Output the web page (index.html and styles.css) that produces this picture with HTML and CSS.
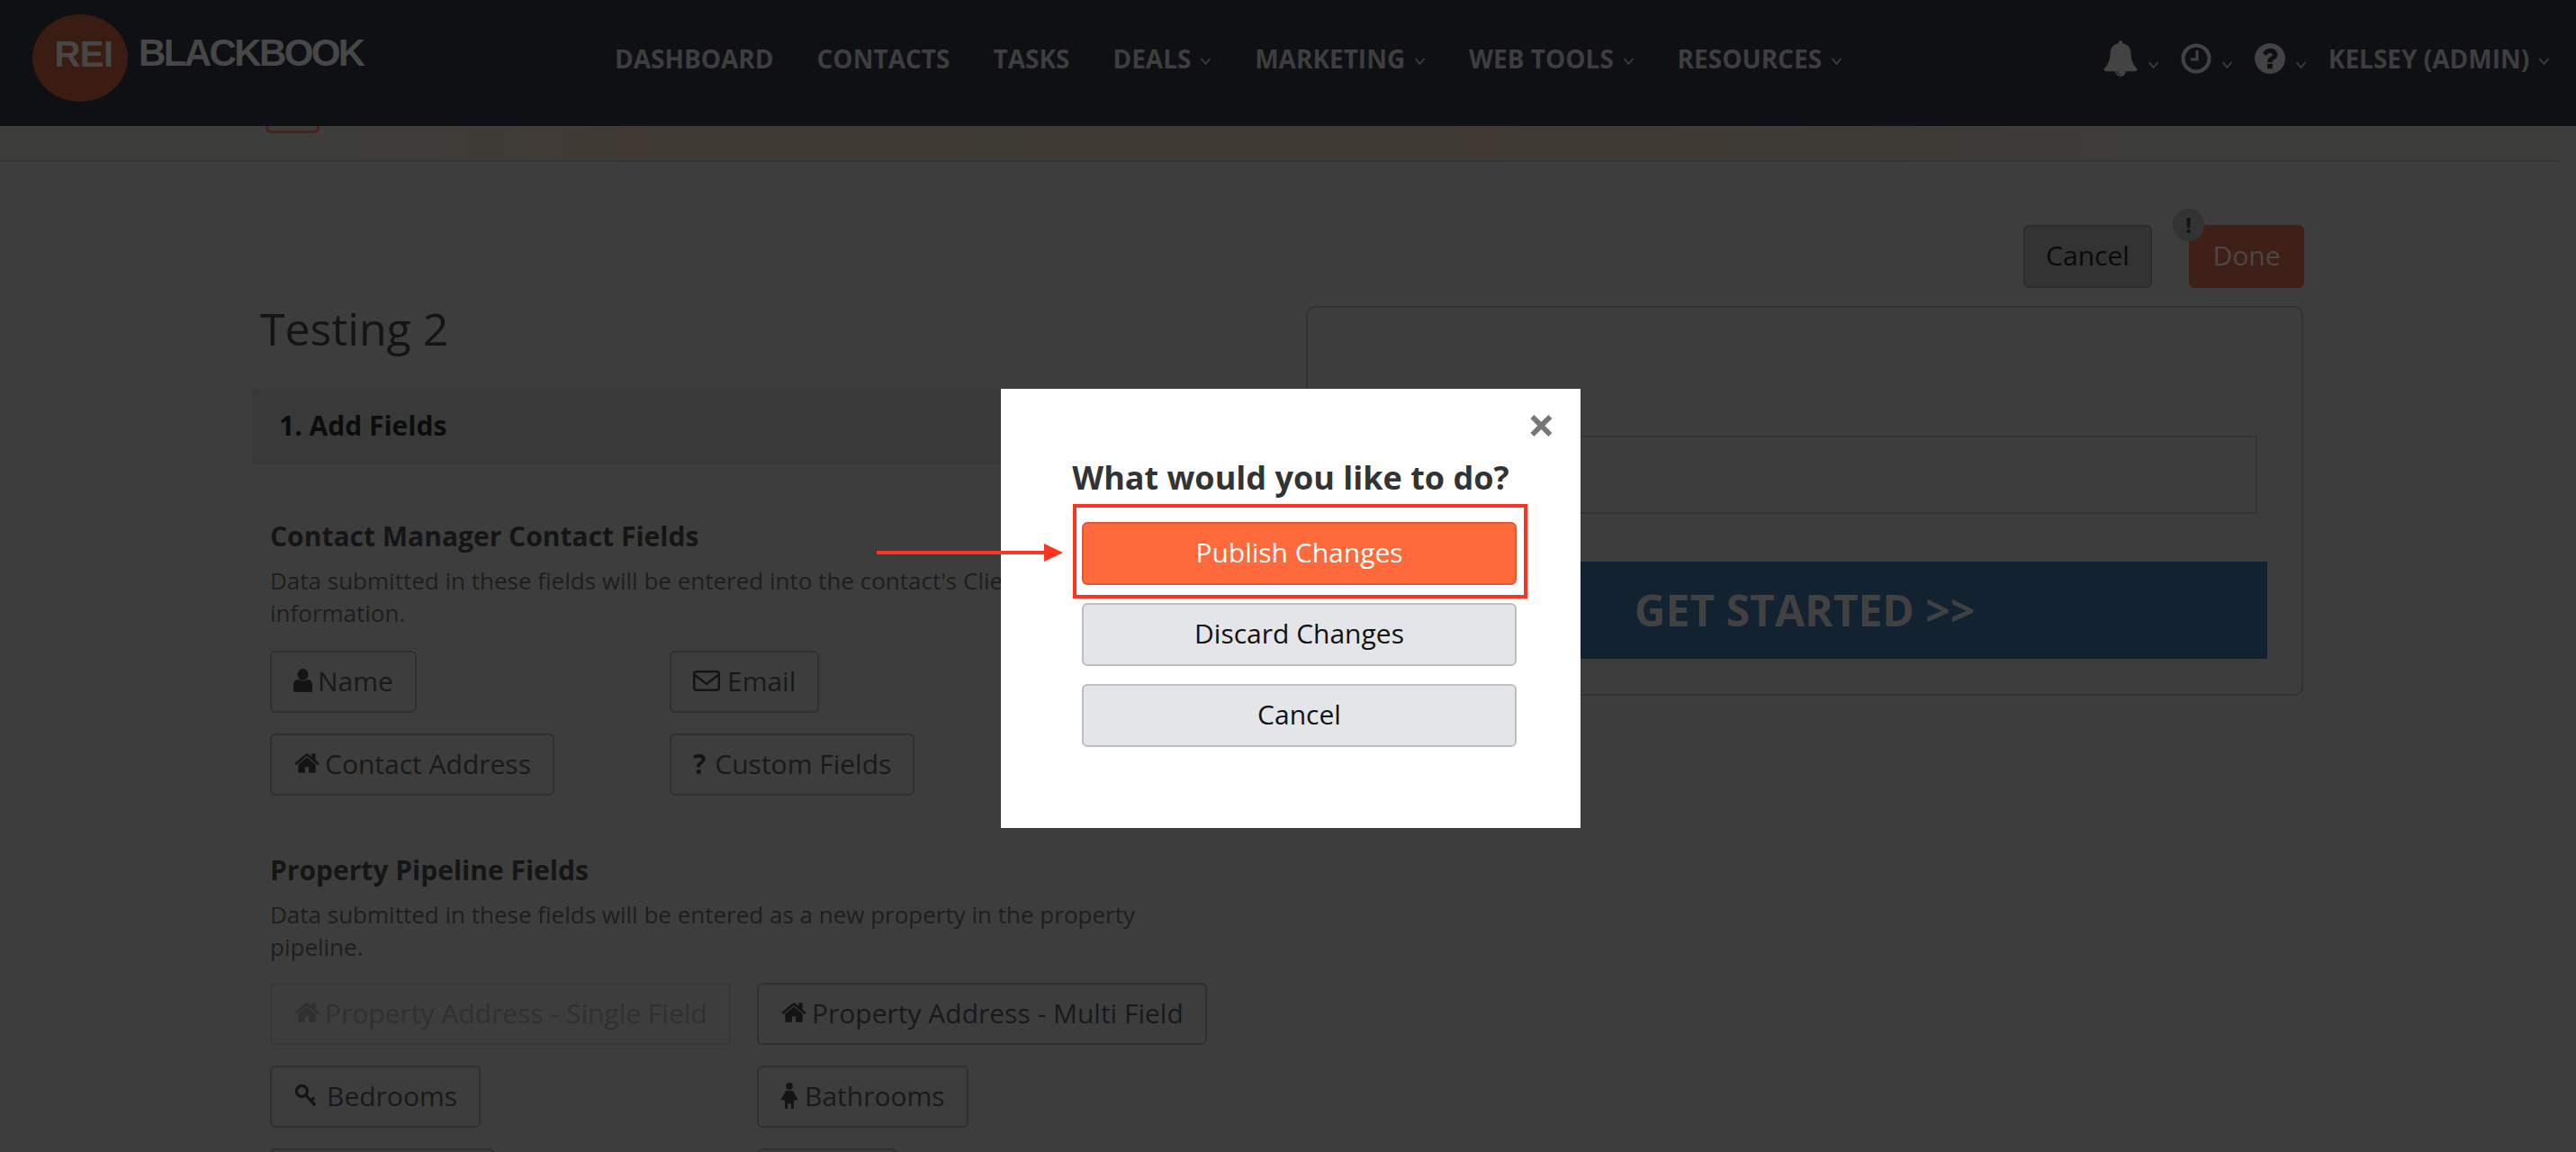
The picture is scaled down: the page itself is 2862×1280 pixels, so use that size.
FILE: index.html
```html
<!DOCTYPE html>
<html lang="en">
<head>
    <meta charset="UTF-8">
    <title>REI BlackBook - Form Builder</title>
    <link rel="stylesheet" href="styles.css">
</head>
<body>
    <svg class="sprites" width="0" height="0">
        <symbol id="i-home" viewBox="0 0 1792 1792"><path d="M1472 992v480q0 26-19 45t-45 19h-384v-384h-256v384h-384q-26 0-45-19t-19-45v-480q0-1 .5-3t.5-3l575-474 575 474q1 2 1 6zm223-69l-62 74q-8 9-21 11h-3q-13 0-21-7l-692-577-692 577q-12 8-24 7-13-2-21-11l-62-74q-8-10-7-23.5t11-21.5l719-599q32-26 76-26t76 26l244 204v-195q0-14 9-23t23-9h192q14 0 23 9t9 23v408l219 182q10 8 11 21.5t-7 23.5z"/></symbol>
        <symbol id="i-chev" viewBox="0 0 12 8"><path d="M1 1l5 6 5-6" fill="none" stroke="currentColor" stroke-width="1.8"/></symbol>
    </svg>

    <header class="topbar">
        <a class="logo">
            <span class="logo-rei">REI</span>
            <span class="logo-name">BLACKBOOK</span>
        </a>
        <nav class="mainnav">
            <a>Dashboard</a>
            <a>Contacts</a>
            <a>Tasks</a>
            <a>Deals <svg class="chev"><use href="#i-chev"/></svg></a>
            <a>Marketing <svg class="chev"><use href="#i-chev"/></svg></a>
            <a>Web Tools <svg class="chev"><use href="#i-chev"/></svg></a>
            <a>Resources <svg class="chev"><use href="#i-chev"/></svg></a>
        </nav>
        <div class="usernav">
            <a class="tool">
                <svg class="tool-bell" viewBox="0 0 1792 1792"><path d="M912 1696q0-16-16-16-59 0-101.5-42.5t-42.5-101.5q0-16-16-16t-16 16q0 73 51.5 124.5t124.5 51.5q16 0 16-16zm816-288q0 52-38 90t-90 38h-448q0 106-75 181t-181 75-181-75-75-181h-448q-52 0-90-38t-38-90q50-42 91-88t85-119.5 74.5-158.5 50-206 19.5-260q0-152 117-282.5t307-158.5q-8-19-8-39 0-40 28-68t68-28 68 28 28 68q0 20-8 39 190 28 307 158.5t117 282.5q0 139 19.5 260t50 206 74.5 158.5 85 119.5 91 88z"/></svg>
                <svg class="chev chev-low"><use href="#i-chev"/></svg>
            </a>
            <a class="tool">
                <svg class="tool-round" viewBox="0 0 34 34"><circle cx="17" cy="17" r="14.5" fill="none" stroke="currentColor" stroke-width="4"/><path d="M18 8v10h-7" fill="none" stroke="currentColor" stroke-width="3"/></svg>
                <svg class="chev chev-low"><use href="#i-chev"/></svg>
            </a>
            <a class="tool">
                <svg class="tool-round" viewBox="128 128 1536 1536"><path d="M1024 1376v-192q0-14-9-23t-23-9h-192q-14 0-23 9t-9 23v192q0 14 9 23t23 9h192q14 0 23-9t9-23zm256-672q0-88-55.5-163t-138.5-116-170-41q-243 0-371 213-15 24 8 42l132 100q7 6 19 6 16 0 25-12 53-68 86-92 34-24 86-24 48 0 85.5 26t37.5 59q0 38-20 61t-68 45q-63 28-115.5 86.5t-52.5 125.5v36q0 14 9 23t23 9h192q14 0 23-9t9-23q0-19 21.5-49.5t54.5-49.5q32-18 49-28.5t46-35 44.5-48 28-60.5 12.5-81zm384 192q0 209-103 385.5t-279.5 279.5-385.5 103-385.5-103-279.5-279.5-103-385.5 103-385.5 279.5-279.5 385.5-103 385.5 103 279.5 279.5 103 385.5z"/></svg>
                <svg class="chev chev-low"><use href="#i-chev"/></svg>
            </a>
            <a class="user">Kelsey (Admin) <svg class="chev"><use href="#i-chev"/></svg></a>
        </div>
    </header>

    <div class="strip"><span class="strip-btn"></span></div>

    <main class="builder">
        <div class="page-actions">
            <button class="btn-cancel">Cancel</button>
            <button class="btn-done">Done<span class="badge">!</span></button>
        </div>

        <div class="columns">
            <section class="col-left">
                <h1>Testing 2</h1>
                <div class="step-head">1. Add Fields</div>

                <h3>Contact Manager Contact Fields</h3>
                <p>Data submitted in these fields will be entered into the contact's Client Manager<br>information.</p>
                <div class="fields fields-contact">
                    <a class="field">
                        <svg class="ico ico-user" viewBox="0 0 21 26"><ellipse cx="10.5" cy="6.5" rx="6" ry="6.5"/><path d="M0 24v-6q0-5 5-6 5 3 11 0 5 1 5 6v6q0 2-2 2H2q-2 0-2-2z"/></svg>
                        Name
                    </a>
                    <a class="field">
                        <svg class="ico ico-mail" viewBox="0 0 30 23"><rect x="1.2" y="1.2" width="27.6" height="20.6" rx="2.5" fill="none" stroke="currentColor" stroke-width="2.4"/><path d="M2 5l13 10L28 5" fill="none" stroke="currentColor" stroke-width="2.4"/></svg>
                        Email
                    </a>
                    <a class="field"><svg class="ico ico-home"><use href="#i-home"/></svg> Contact Address</a>
                    <a class="field"><b class="ico-q">?</b> Custom Fields</a>
                </div>

                <h3 class="second">Property Pipeline Fields</h3>
                <p>Data submitted in these fields will be entered as a new property in the property<br>pipeline.</p>
                <div class="fields fields-property">
                    <a class="field field-off"><svg class="ico ico-home"><use href="#i-home"/></svg> Property Address - Single Field</a>
                    <a class="field"><svg class="ico ico-home"><use href="#i-home"/></svg> Property Address - Multi Field</a>
                    <a class="field">
                        <svg class="ico ico-key" viewBox="0 0 28 28"><circle cx="9" cy="9" r="6.5" fill="none" stroke="currentColor" stroke-width="3.4"/><path d="M13 13l12 13M20 20l4-3" fill="none" stroke="currentColor" stroke-width="3.4"/></svg>
                        Bedrooms
                    </a>
                    <a class="field">
                        <svg class="ico ico-female" viewBox="0 0 20 30"><circle cx="10" cy="4" r="4"/><path d="M6 9h8l6 11h-4l-1 3v7h-3v-6H8v6H5v-7l-1-3H0z"/></svg>
                        Bathrooms
                    </a>
                    <a class="field field-w1"></a>
                    <a class="field field-w2"></a>
                </div>
            </section>

            <aside class="preview">
                <div class="preview-input"></div>
                <div class="preview-cta">GET STARTED &gt;&gt;</div>
            </aside>
        </div>
    </main>

    <div class="modal">
        <span class="modal-close">&times;</span>
        <h2>What would you like to do?</h2>
        <div class="modal-actions">
            <button class="mbtn mbtn-primary">Publish Changes</button>
            <button class="mbtn">Discard Changes</button>
            <button class="mbtn">Cancel</button>
        </div>
    </div>

    <!-- red callout from the screenshot -->
    <div class="callout-box"></div>
    <div class="callout-arrow"></div>
</body>
</html>
```

FILE: styles.css
```css
* {
    box-sizing: border-box;
}
html, body {
    height: 1280px;
    overflow: hidden;
}
body {
    margin: 0;
    position: relative;
    background-color: #3d3d3d;
    color: #191919;
    font-family: "Open Sans", Arial, sans-serif;
}
.sprites {
    position: absolute;
}
svg {
    fill: currentColor;
}

/* top bar */
.topbar {
    position: relative;
    z-index: 1;
    display: flex;
    align-items: center;
    height: 140px;
    background-color: #0e1013;
    color: #3e3e3e;
    font-size: 28px;
    font-weight: 700;
    text-transform: uppercase;
    white-space: nowrap;
}
.logo {
    display: flex;
    width: 683px;
    flex: none;
    height: 140px;
    font-family: "Liberation Sans", Arial, sans-serif;
    color: #474747;
}
.logo-rei {
    display: flex;
    align-items: flex-start;
    justify-content: center;
    width: 106px;
    height: 97px;
    margin: 16px 0 0 36px;
    padding-top: 20px;
    padding-left: 8px;
    border-radius: 50%;
    background-color: #3a1c13;
    font-size: 40px;
    line-height: 48px;
    letter-spacing: -0.5px;
}
.logo-name {
    margin: 34px 0 0 12px;
    font-size: 42px;
    line-height: 50px;
    letter-spacing: -2.6px;
}
.mainnav {
    display: flex;
    gap: 48px;
    margin-bottom: 11px;
}
.chev {
    width: 13px;
    height: 8px;
    margin-left: 2.5px;
    vertical-align: 4px;
}
.chev-low {
    align-self: center;
    margin: 14px 0 0 11px;
}
.usernav {
    display: flex;
    align-items: center;
    margin-left: 289px;
    margin-bottom: 11px;
}
.tool {
    display: flex;
    color: #434343;
    margin-right: 24px;
}
.tool .chev {
    color: #3e3e3e;
}
.tool-bell {
    width: 40px;
    height: 40px;
    margin-right: -1px;
}
.tool-round {
    width: 34px;
    height: 34px;
}
.user {
    margin-left: 0;
}

/* strip under the top bar */
.strip {
    position: relative;
    width: 2844px;
    height: 40px;
    border-bottom: 2px solid #353535;
    background: linear-gradient(90deg, #3d3d3c 0, #3d3d3b 380px, #403a33 700px, #3e3a34 1100px, #403a33 1650px, #3e3b36 2100px, #3c3c3a 2400px, #3c3c3b 100%);
}
.strip-btn {
    position: absolute;
    left: 295px;
    top: -20px;
    width: 60px;
    height: 28px;
    border: 3px solid #4f2015;
    border-radius: 6px;
}

/* builder page */
.builder {
    height: 1100px;
    overflow: hidden;
    padding: 70px 302px 0 280px;
}
.page-actions {
    display: flex;
    justify-content: flex-end;
    gap: 41px;
}
.page-actions button {
    position: relative;
    height: 70px;
    padding: 0 0 3px;
    border-radius: 6px;
    font-family: inherit;
    font-size: 30px;
}
.btn-cancel {
    width: 143px;
    border: 2px solid #2c2c2c;
    background-color: #333;
    color: #0a0a0a;
}
.btn-done {
    width: 128px;
    border: 0;
    background-color: #3f2018;
    color: #4b4746;
}
.badge {
    position: absolute;
    left: -18px;
    top: -18px;
    width: 35px;
    height: 36px;
    border-radius: 50%;
    background-color: #333;
    color: #111;
    font-size: 24px;
    font-weight: 700;
    line-height: 36px;
    text-align: center;
}
.columns {
    display: flex;
}
.col-left {
    width: 1171px;
    flex: none;
}
h1 {
    margin: 12px 0 0 9px;
    font-size: 50px;
    font-weight: 400;
    line-height: 66px;
    color: #141414;
}
.step-head {
    width: 1100px;
    height: 84px;
    margin-top: 34px;
    padding-left: 28px;
    border: 2px solid #383838;
    background-color: #393939;
    color: #0c0c0c;
    font-size: 30px;
    font-weight: 700;
    line-height: 78px;
}
h3 {
    margin: 60px 0 0 20px;
    font-size: 30px;
    font-weight: 700;
    line-height: 40px;
    color: #151515;
}
h3.second {
    margin-top: 63px;
}
p {
    margin: 11px 0 0 20px;
    font-size: 26px;
    line-height: 36.4px;
    color: #1e1e1e;
}
.fields {
    display: grid;
    grid-auto-rows: 69px;
    row-gap: 23px;
    justify-items: start;
    margin: 23px 0 0 20px;
}
.fields-contact {
    grid-template-columns: 444px 1fr;
}
.fields-property {
    grid-template-columns: 541px 1fr;
    margin-top: 21px;
}
.field {
    display: flex;
    align-items: center;
    gap: 6px;
    height: 69px;
    padding: 0 24px 2px;
    border: 2px solid #303030;
    border-radius: 6px;
    font-size: 30px;
    color: #191919;
    white-space: nowrap;
}
.field-off {
    border-color: #383838;
    color: #303030;
}
.field-w1 {
    width: 249px;
}
.field-w2 {
    width: 155px;
}
.ico {
    flex: none;
    color: #141414;
}
.field-off .ico {
    color: #303030;
}
.ico-user {
    width: 21px;
    height: 26px;
}
.ico-mail {
    width: 30px;
    height: 23px;
    margin-right: 2px;
}
.ico-home {
    width: 30px;
    height: 30px;
    margin-right: -1px;
}
.ico-key {
    width: 28px;
    height: 26px;
    margin-right: 3px;
}
.ico-female {
    width: 20px;
    height: 29px;
    margin-right: 1px;
}
.ico-q {
    margin-right: 4px;
    color: #141414;
}

/* form preview on the right */
.preview {
    width: 1108px;
    height: 433px;
    margin-top: 20px;
    padding: 142px 40px 0 38px;
    border: 2px solid #333;
    border-radius: 10px;
}
.preview-input {
    width: 1004px;
    height: 87px;
    margin-left: 13px;
    border: 2px solid #343434;
}
.preview-cta {
    width: 1028px;
    height: 108px;
    margin-top: 53px;
    background-color: #122231;
    color: #414141;
    font-size: 48px;
    font-weight: 700;
    line-height: 108px;
    text-align: center;
}

/* modal */
.modal {
    position: absolute;
    left: 1112px;
    top: 432px;
    width: 644px;
    height: 488px;
    background-color: #fff;
}
.modal-close {
    position: absolute;
    right: 28px;
    top: 6px;
    color: #777;
    font-size: 54px;
    font-weight: 700;
    line-height: 66px;
}
.modal h2 {
    margin: 74px 0 0;
    color: #333;
    font-size: 36px;
    font-weight: 700;
    line-height: 50px;
    text-align: center;
}
.modal-actions {
    display: flex;
    flex-direction: column;
    gap: 20px;
    width: 483px;
    margin: 24px 0 0 90px;
}
.mbtn {
    height: 70px;
    padding: 0 0 3px;
    border: 2px solid #bdbdbd;
    border-radius: 6px;
    background-color: #e4e5e9;
    color: #111;
    font-family: inherit;
    font-size: 30px;
}
.mbtn-primary {
    border-color: #e2593a;
    background-color: #ff6a3d;
    color: #fff;
}

/* red annotation over the modal */
.callout-box {
    position: absolute;
    left: 1192px;
    top: 560px;
    width: 505px;
    height: 105px;
    border: 4px solid #ff3322;
}
.callout-arrow {
    position: absolute;
    left: 974px;
    top: 612px;
    width: 188px;
    height: 4px;
    background-color: #ff3322;
}
.callout-arrow::after {
    content: "";
    position: absolute;
    left: 186px;
    top: -8px;
    border-left: 21px solid #ff3322;
    border-top: 10px solid transparent;
    border-bottom: 10px solid transparent;
}
```
